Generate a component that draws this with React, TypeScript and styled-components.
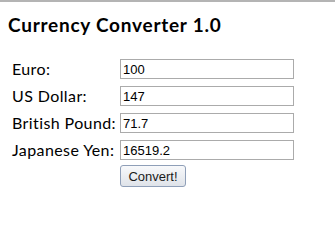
import React from 'react';
import styled, { createGlobalStyle } from 'styled-components';

const GlobalStyle = createGlobalStyle`
  html, body {
    margin: 0;
    padding: 0;
    background: #ffffff;
  }
`;

const Page = styled.div`
  border-top: 2px solid #b4b4b4;
  padding: 0 8px;
  font-family: "Comic Sans MS", Lato, sans-serif;
  color: #000;
`;

const Title = styled.h2`
  margin: 0;
  padding-top: 12px;
  font-size: 19px;
  line-height: 22px;
  letter-spacing: 0.75px;
  font-weight: bold;
`;

const Form = styled.form`
  display: grid;
  grid-template-columns: 108px 174px;
  row-gap: 7px;
  align-items: center;
  margin: 23px 0 0 4px;
`;

const Label = styled.label`
  font-size: 16px;
  line-height: 20px;
  letter-spacing: 0.4px;
`;

const Field = styled.input`
  box-sizing: border-box;
  width: 174px;
  height: 20px;
  margin: 0;
  padding: 0 2px;
  border: 1px solid #ababab;
  font-family: "Liberation Sans", Arial, sans-serif;
  font-size: 13px;
  color: #000;
  outline: none;
`;

const ConvertButton = styled.button`
  grid-column: 2;
  justify-self: start;
  margin-top: -2px;
  width: 66px;
  height: 22px;
  padding: 0;
  border: 1px solid #8f9fb8;
  border-radius: 3px;
  background: linear-gradient(#f8f9fb, #dfe3e9);
  font-family: "Liberation Sans", Arial, sans-serif;
  font-size: 13px;
  color: #1a1a1a;
`;

const currencies = [
  { id: 'eur', label: 'Euro:', value: '100' },
  { id: 'usd', label: 'US Dollar:', value: '147' },
  { id: 'gbp', label: 'British Pound:', value: '71.7' },
  { id: 'jpy', label: 'Japanese Yen:', value: '16519.2' },
];

const App: React.FC = () => {
  return (
    <Page>
      <GlobalStyle />
      <Title>Currency Converter 1.0</Title>
      <Form onSubmit={e => e.preventDefault()}>
        {currencies.map(c => (
          <React.Fragment key={c.id}>
            <Label htmlFor={c.id}>{c.label}</Label>
            <Field id={c.id} type="text" defaultValue={c.value} />
          </React.Fragment>
        ))}
        <ConvertButton type="submit">Convert!</ConvertButton>
      </Form>
    </Page>
  );
};

export default App;
